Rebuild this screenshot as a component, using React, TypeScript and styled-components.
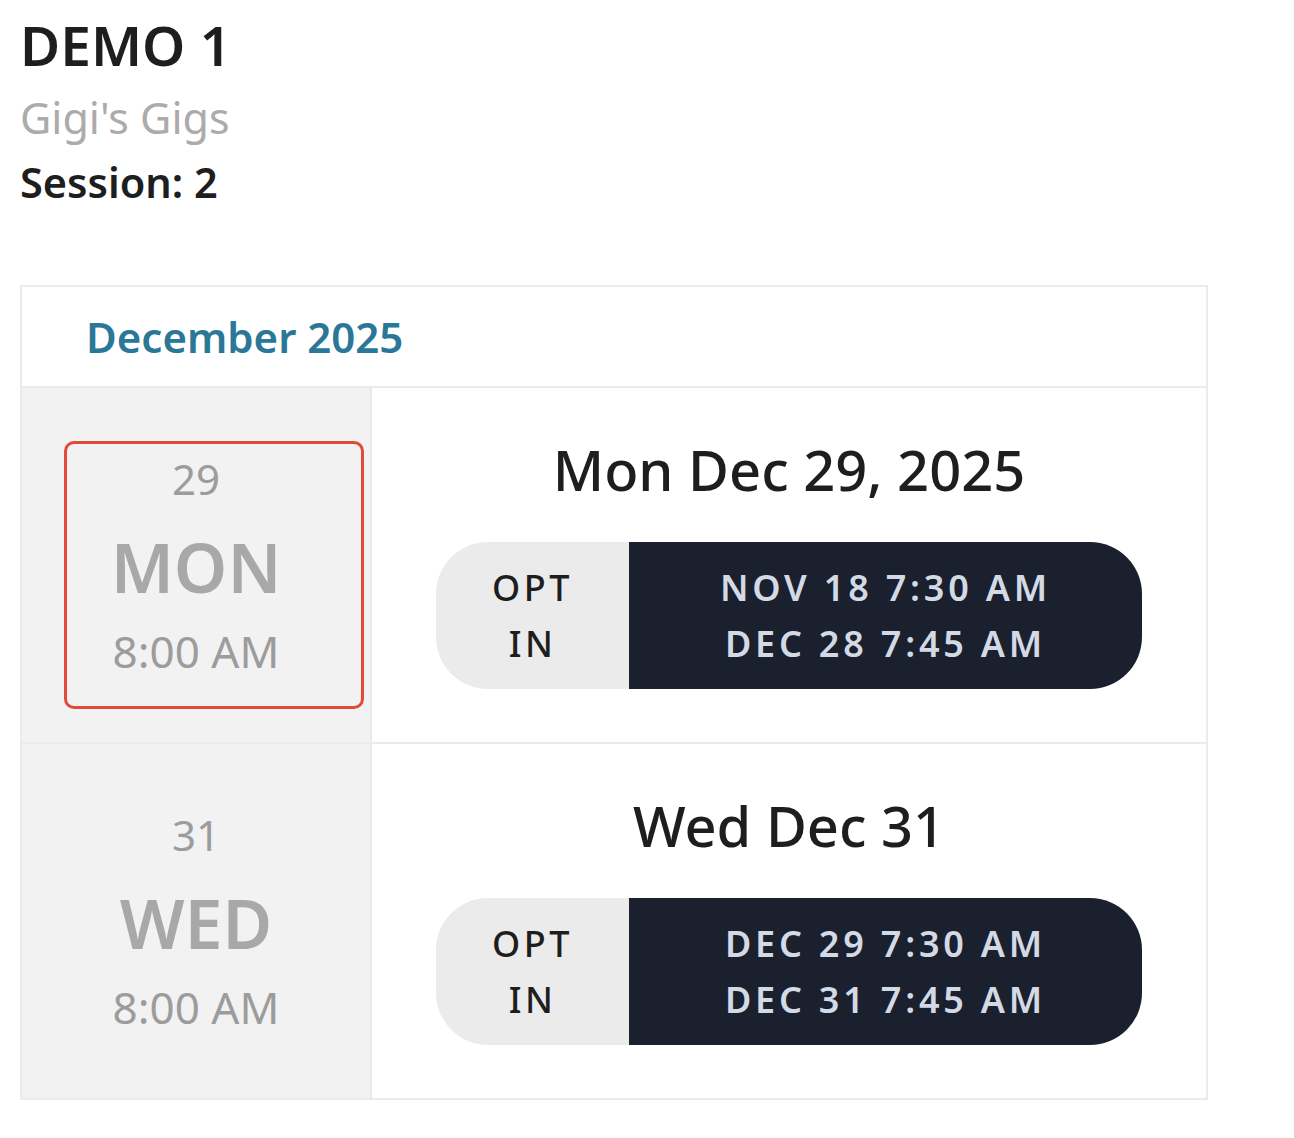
import React from "react";
import styled, { createGlobalStyle } from "styled-components";

const GlobalStyle = createGlobalStyle`
  html, body {
    margin: 0;
    padding: 0;
    background: #ffffff;
  }
  body {
    font-family: "Noto Sans", "Open Sans", "Liberation Sans", sans-serif;
    color: #212121;
  }
  * { box-sizing: border-box; }
`;

const Page = styled.div`
  padding: 11px 20px 40px 20px;
`;

const TitleBlock = styled.header`
  display: flex;
  flex-direction: column;
`;

const Title = styled.h1`
  margin: 0;
  font-size: 55px;
  line-height: 68px;
  font-weight: 600;
  color: #1e1e1e;
`;

const Subtitle = styled.div`
  margin-top: 8px;
  font-size: 43px;
  line-height: 62px;
  font-weight: 400;
  color: #ababab;
`;

const SessionLine = styled.div`
  margin-top: 6px;
  font-size: 41.5px;
  line-height: 54px;
  font-weight: 600;
  color: #1e1e1e;
`;

const Card = styled.section`
  margin-top: 76px;
  width: 1188px;
  border: 2px solid #ebebeb;
  background: #ffffff;
`;

const MonthHeader = styled.div`
  height: 101px;
  padding-left: 64px;
  border-bottom: 2px solid #ebebeb;
  font-size: 42px;
  line-height: 99px;
  font-weight: 600;
  color: #2b7798;
`;

const Row = styled.div<{ $last?: boolean }>`
  display: grid;
  grid-template-columns: 350px 1fr;
  border-bottom: ${(p) => (p.$last ? "none" : "2px solid #ebebeb")};
`;

const DayCell = styled.div`
  position: relative;
  background: #f2f2f2;
  border-right: 2px solid #e9e9e9;
  padding-top: 66px;
  display: flex;
  flex-direction: column;
  align-items: center;
  color: #a3a3a3;
`;

const DayNumber = styled.div`
  font-size: 42px;
  line-height: 50px;
  font-weight: 400;
  color: #9c9c9c;
`;

const DayName = styled.div`
  margin-top: 23px;
  font-size: 68px;
  line-height: 80px;
  font-weight: 600;
  color: #a8a8a8;
`;

const DayTime = styled.div`
  margin-top: 19px;
  font-size: 44px;
  line-height: 50px;
  font-weight: 400;
  color: #9c9c9c;
`;

const Highlight = styled.div`
  position: absolute;
  left: 42px;
  top: 53px;
  width: 300px;
  height: 268px;
  border: 3px solid #e04a37;
  border-radius: 10px;
  pointer-events: none;
`;

const EventCell = styled.div`
  display: flex;
  flex-direction: column;
  align-items: center;
  padding: 48px 0 53px 0;
`;

const EventTitle = styled.h2`
  margin: 0;
  font-size: 56px;
  line-height: 66px;
  font-weight: 500;
  color: #1e1e1e;
`;

const Pill = styled.div`
  margin-top: 40px;
  width: 706px;
  height: 147px;
  display: grid;
  grid-template-columns: 193px 1fr;
  border-radius: 52px;
  overflow: hidden;
`;

const PillLabel = styled.div`
  background: #ebebeb;
  display: flex;
  flex-direction: column;
  align-items: center;
  justify-content: center;
  font-size: 36px;
  line-height: 56px;
  font-weight: 500;
  letter-spacing: 3.5px;
  color: #1e1e1e;
`;

const PillRange = styled.div`
  background: #1a202e;
  display: flex;
  flex-direction: column;
  align-items: center;
  justify-content: center;
  font-size: 36px;
  line-height: 56px;
  font-weight: 600;
  letter-spacing: 3.8px;
  color: #d3dae5;
`;

type Session = {
  num: string;
  day: string;
  time: string;
  title: string;
  open: string;
  close: string;
  highlighted?: boolean;
};

const sessions: Session[] = [
  {
    num: "29",
    day: "MON",
    time: "8:00 AM",
    title: "Mon Dec 29, 2025",
    open: "NOV 18 7:30 AM",
    close: "DEC 28 7:45 AM",
    highlighted: true,
  },
  {
    num: "31",
    day: "WED",
    time: "8:00 AM",
    title: "Wed Dec 31",
    open: "DEC 29 7:30 AM",
    close: "DEC 31 7:45 AM",
  },
];

export default function App() {
  return (
    <>
      <GlobalStyle />
      <Page>
        <TitleBlock>
          <Title>DEMO 1</Title>
          <Subtitle>Gigi's Gigs</Subtitle>
          <SessionLine>Session: 2</SessionLine>
        </TitleBlock>
        <Card>
          <MonthHeader>December 2025</MonthHeader>
          {sessions.map((s, i) => (
            <Row key={s.num} $last={i === sessions.length - 1}>
              <DayCell>
                <DayNumber>{s.num}</DayNumber>
                <DayName>{s.day}</DayName>
                <DayTime>{s.time}</DayTime>
                {s.highlighted && <Highlight />}
              </DayCell>
              <EventCell>
                <EventTitle>{s.title}</EventTitle>
                <Pill>
                  <PillLabel>
                    <span>OPT</span>
                    <span>IN</span>
                  </PillLabel>
                  <PillRange>
                    <span>{s.open}</span>
                    <span>{s.close}</span>
                  </PillRange>
                </Pill>
              </EventCell>
            </Row>
          ))}
        </Card>
      </Page>
    </>
  );
}
